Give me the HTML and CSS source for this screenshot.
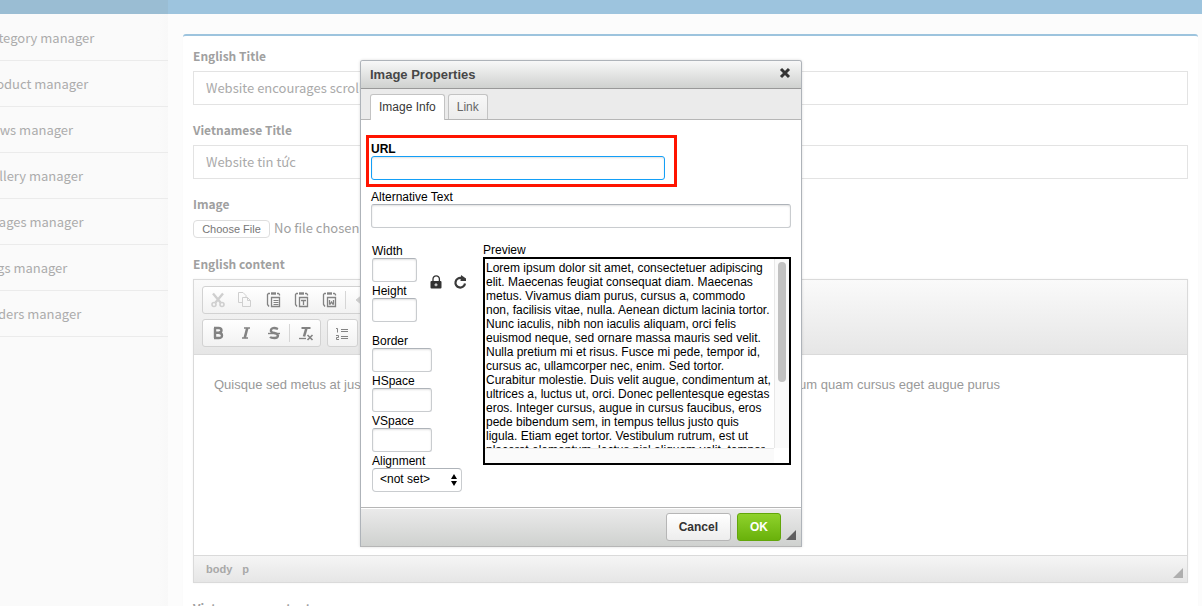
FILE: index.html
```html
<!DOCTYPE html>
<html lang="en">
<head>
<meta charset="utf-8">
<title>Image Properties</title>
<link rel="stylesheet" href="styles.css">
</head>
<body>
<div class="page">
  <header class="topbar"><div class="topbar-brand"></div></header>
  <div class="columns">
    <nav class="sidebar">
      <a href="#">Category manager</a>
      <a href="#">Product manager</a>
      <a href="#">News manager</a>
      <a href="#">Gallery manager</a>
      <a href="#">Images manager</a>
      <a href="#">Tags manager</a>
      <a href="#">Sliders manager</a>
    </nav>
    <main class="main">
      <form class="panel">
        <div class="field">
          <label for="title-en">English Title</label>
          <input class="text-box" id="title-en" type="text" value="Website encourages scrolling">
        </div>
        <div class="field">
          <label for="title-vi">Vietnamese Title</label>
          <input class="text-box" id="title-vi" type="text" value="Website tin tức">
        </div>
        <div class="field">
          <label for="image">Image</label>
          <input class="file-box" id="image" type="file">
        </div>
        <div class="field">
          <span class="label">English content</span>
          <div class="editor">
            <div class="toolbar">
              <div class="toolrow">
                <div class="group">
                  <button type="button" class="tool dim" aria-label="Cut"><svg viewBox="0 0 16 16"><path d="M3 1.500l7.500 9M13 1.500l-7.500 9" stroke-width="2.400"/><circle cx="4" cy="12.500" r="2" stroke-width="1.600"/><circle cx="12" cy="12.500" r="2" stroke-width="1.600"/></svg></button>
                  <button type="button" class="tool dim" aria-label="Copy"><svg viewBox="0 0 16 16"><path d="M4.500 10.500h-4v-10h4.500l3 3v1.500M4.500 5.500h5l3 3v6h-8zM9.500 5.500v3h3"/></svg></button>
                  <button type="button" class="tool" aria-label="Paste"><svg viewBox="0 0 16 16"><path d="M4 1.500h-1.500l-1 1v10l1.500 2M11 1.500h1.500l1 1v1" stroke-width="1.300"/><path d="M5 1.500h5" stroke-width="2.400"/><path d="M5.500 5.500h8v9h-8z" stroke-width="1.300"/><path d="M7.500 8.500h5M7.500 10.500h5M7.500 12.500h5"/></svg></button>
                  <button type="button" class="tool" aria-label="Paste as plain text"><svg viewBox="0 0 16 16"><path d="M4 1.500h-1.500l-1 1v10l1.500 2M11 1.500h1.500l1 1v1" stroke-width="1.300"/><path d="M5 1.500h5" stroke-width="2.400"/><path d="M5.500 5.500h8v9h-8zM7 8.500h5M9.500 8.500v4.500" stroke-width="1.300"/></svg></button>
                  <button type="button" class="tool" aria-label="Paste from Word"><svg viewBox="0 0 16 16"><path d="M4 1.500h-1.500l-1 1v10l1.500 2M11 1.500h1.500l1 1v1" stroke-width="1.300"/><path d="M5 1.500h5" stroke-width="2.400"/><path d="M5.500 5.500h8v9h-8zM7.500 8v4h0.700l1.300-2 1.300 2h0.700V8" stroke-width="1.300"/></svg></button>
                  <span class="sep"></span>
                  <button type="button" class="tool dim" aria-label="Undo"><svg viewBox="0 0 16 16"><path d="M2 8l5-4v8zM7 8h7" fill="currentColor"/></svg></button>
                </div>
              </div>
              <div class="toolrow">
                <div class="group">
                  <button type="button" class="tool" aria-label="Bold"><svg viewBox="0 0 16 16"><path d="M5 3v10M4 3h4.500q3 0 3 2.300T8.500 7.700H5M8.500 7.700q3.500 0 3.500 2.700T8.500 13H4" stroke-width="2.400"/></svg></button>
                  <button type="button" class="tool" aria-label="Italic"><svg viewBox="0 0 16 16"><path d="M6 3h6M4 13h6" stroke-width="1.600"/><path d="M9.300 3l-2.600 10" stroke-width="2.600"/></svg></button>
                  <button type="button" class="tool" aria-label="Strikethrough"><svg viewBox="0 0 16 16"><path d="M12 4Q8.500 2.500 6.500 3.300T5 6.500Q6 7.700 8.500 8T12 10.500Q12 13 8.500 13T4 12" stroke-width="2.300"/><path d="M2 8.500h12" stroke-width="1.400"/></svg></button>
                  <span class="sep"></span>
                  <button type="button" class="tool" aria-label="Remove format"><svg viewBox="0 0 16 16"><path d="M3.500 3h9" stroke-width="2"/><path d="M8.500 3L6 11.500" stroke-width="2.600"/><path d="M1 13.500h7" stroke-width="1.300"/><path d="M9.500 10l5 5M14.500 10l-5 5" stroke-width="1.600"/></svg></button>
                </div>
                <div class="group">
                  <button type="button" class="tool" aria-label="Numbered list"><svg viewBox="0 0 16 16"><path d="M1 3.500h1.500v4M1 10.500h2.500v2h-2v2h2.500M6 4.500h7M6 6.500h7M6 11.500h7M6 13.500h7"/></svg></button>
                </div>
              </div>
            </div>
            <div class="content"><p><span>Quisque sed metus at justo</span><span>vestibulum quam cursus eget augue purus</span></p></div>
            <div class="status"><a href="#">body</a><a href="#">p</a><svg class="grip" viewBox="0 0 10 10"><path d="M10 0v10H0z"/></svg></div>
          </div>
        </div>
        <div class="field"><span class="label">Vietnamese content</span></div>
      </form>
    </main>
  </div>
</div>

<section class="dialog" role="dialog" aria-labelledby="dialog-title">
  <div class="dialog-title">
    <span id="dialog-title">Image Properties</span>
    <button type="button" class="close" aria-label="Close"><svg viewBox="0 0 12 12"><path d="M2 2l8 8M10 2l-8 8"/></svg></button>
  </div>
  <div class="tabs">
    <button type="button" class="tab active">Image Info</button>
    <button type="button" class="tab">Link</button>
  </div>
  <div class="dialog-body">
    <div class="highlight row">
      <label for="url">URL</label>
      <input class="box focused" id="url" type="text">
    </div>
    <div class="row alt">
      <label for="alt">Alternative Text</label>
      <input class="box" id="alt" type="text">
    </div>
    <div class="split">
      <div class="props">
        <div class="size">
          <div class="stack">
            <div class="row small"><label for="w">Width</label><input class="box" id="w" type="text"></div>
            <div class="row small"><label for="h">Height</label><input class="box" id="h" type="text"></div>
          </div>
          <button type="button" class="icon" aria-label="Lock ratio"><svg viewBox="0 0 16 16"><path d="M5 7V4a3.200 3.200 0 0 1 6.400 0V7" fill="none" stroke="#333" stroke-width="1.300"/><rect x="2.500" y="6" width="11" height="7.500" rx="1" fill="#333"/><path d="M8 8.300v3M6.500 9.800h3" stroke="#ddd" stroke-width="1.200"/></svg></button>
          <button type="button" class="icon" aria-label="Reset size"><svg viewBox="0 0 16 16"><path d="M9.500 3.100A4.800 4.800 0 1 0 13 8.500" fill="none" stroke="#3a3a3a" stroke-width="2.200"/><path d="M9 0l5 3.500V6H8.500z" fill="#3a3a3a"/></svg></button>
        </div>
        <div class="stack">
          <div class="row medium"><label for="b">Border</label><input class="box" id="b" type="text"></div>
          <div class="row medium"><label for="hs">HSpace</label><input class="box" id="hs" type="text"></div>
          <div class="row medium"><label for="vs">VSpace</label><input class="box" id="vs" type="text"></div>
          <div class="row align"><label for="al">Alignment</label>
            <div class="select"><select id="al"><option>&lt;not set&gt;</option></select><svg viewBox="0 0 6 12"><path d="M3 0l3 5H0zM3 12L0 7h6z"/></svg></div>
          </div>
        </div>
      </div>
      <div class="preview-col">
        <div>Preview</div>
        <div class="preview">
          <div class="preview-text">Lorem ipsum dolor sit amet, consectetuer adipiscing elit. Maecenas feugiat consequat diam. Maecenas metus. Vivamus diam purus, cursus a, commodo<br>non, facilisis vitae, nulla. Aenean dictum lacinia tortor. Nunc iaculis, nibh non iaculis aliquam, orci felis euismod neque, sed ornare massa mauris sed velit. Nulla pretium mi et risus. Fusce mi pede, tempor id, cursus ac, ullamcorper nec, enim. Sed tortor. Curabitur molestie. Duis velit augue, condimentum at, ultrices a, luctus ut, orci. Donec pellentesque egestas eros. Integer cursus, augue in cursus faucibus, eros pede bibendum sem, in tempus tellus justo quis ligula. Etiam eget tortor. Vestibulum rutrum, est ut placerat elementum, lectus nisl aliquam velit, tempor</div>
          <div class="track-y"><div class="thumb"></div></div>
          <div class="track-x"></div>
        </div>
      </div>
    </div>
  </div>
  <div class="dialog-foot">
    <button type="button" class="btn">Cancel</button>
    <button type="button" class="btn ok">OK</button>
    <svg class="grip" viewBox="0 0 10 10"><path d="M10 0v10H0z"/></svg>
  </div>
</section>
</body>
</html>
```
FILE: styles.css
```css
* { box-sizing: border-box; }
body {
  margin: 0;
  font: 13px/20px "Noto Sans CJK SC", "Noto Sans", sans-serif;
  color: #a3a3a3;
  background: #fcfcfc;
}
button, input, select { font: inherit; color: inherit; margin: 0; }
a { color: inherit; text-decoration: none; }
.page { height: 100vh; overflow: hidden; display: flex; flex-direction: column; }
.topbar { flex: none; height: 14px; background: #9dc4de; }
.topbar-brand { width: 168px; height: 100%; background: #9abdd3; }
.columns { flex: 1; display: flex; align-items: stretch; min-height: 0; }
.sidebar {
  flex: none; width: 168px; padding-top: 1px; overflow: hidden;
  display: flex; flex-direction: column;
  background: linear-gradient(to right, #fafafa 94%, #f8f8f8);
}
.sidebar a {
  height: 46px; line-height: 45px; margin-left: -17px;
  color: #acacac; border-bottom: 1px solid #ebebeb; white-space: nowrap;
}
.main { flex: 1; min-width: 0; padding: 20px 4px 0 15px; }
.panel {
  border-top: 2px solid #9dc4de; border-radius: 3px 3px 0 0;
  background: #fff; padding: 10px; box-shadow: 0 1px 1px rgba(0,0,0,.06);
  display: flex; flex-direction: column; gap: 15px;
}
.field { display: flex; flex-direction: column; gap: 5px; }
.field > label, .label { font-size: 12px; font-weight: 700; line-height: 20px; color: #a0a0a0; }
.text-box {
  width: 100%; height: 34px; padding: 0 12px 2px;
  border: 1px solid #e3e3e3; background: #fff; color: #aaa;
}
.file-box { height: 20px; line-height: 18px; color: #a0a0a0; overflow: visible; }
.file-box::file-selector-button {
  font: 11px/16px "Liberation Sans", Arial, sans-serif; color: #777;
  height: 18px; width: 77px; padding: 0; margin: 0 4px 0 0;
  border: 1px solid #dedede; border-radius: 4px; background: #fff;
}
.editor { border: 1px solid #dadada; box-shadow: 0 0 2px rgba(0,0,0,.06); }
.toolbar {
  padding: 6px 8px 7px; display: flex; flex-direction: column; gap: 5px;
  background: linear-gradient(#fafafa, #e6e6e6); border-bottom: 1px solid #dadada;
}
.toolrow { display: flex; gap: 6px; }
.group {
  display: flex; align-items: center; height: 28px; padding: 0 1px 0 0;
  border: 1px solid #d2d2d2; border-radius: 3px;
  background: linear-gradient(#fff, #f2f2f2);
}
.tool { width: 28px; height: 26px; padding: 0 5px 0 7px; border: 0; background: none; color: #838383; display: flex; align-items: center; }
.tool svg { width: 16px; height: 16px; fill: none; stroke: currentColor; }
.dim { color: #cfcfcf; }
.sep { width: 1px; height: 18px; margin: 0 1px 0 2px; background: #d6d6d6; }
.content { height: 200px; padding: 20px; font: 13px/20px "Liberation Sans", Arial, sans-serif; color: #999; }
.content p { margin: 0; max-width: 786px; display: flex; justify-content: space-between; white-space: nowrap; }
.status {
  display: flex; align-items: center; gap: 10px; height: 27px; padding: 0 4px 0 12px;
  border-top: 1px solid #dadada; background: linear-gradient(#f5f5f5, #e6e6e6);
  font: bold 11px/16px "Liberation Sans", Arial, sans-serif; color: #a8a8a8;
}
.grip { width: 10px; height: 10px; margin-left: auto; fill: #aeaeae; align-self: flex-end; margin-bottom: 4px; }

.dialog {
  position: absolute; left: 360px; top: 60px; width: 442px;
  border: 1px solid #aeb3b9; border-bottom-color: #b6b6b6; border-radius: 3px 3px 0 0;
  box-shadow: 0 0 3px rgba(0,0,0,.15); background: #fff;
  font: 12px/14px "Liberation Sans", Arial, sans-serif; color: #000;
}
.dialog-title {
  display: flex; align-items: center; justify-content: space-between;
  height: 28px; padding: 0 10px 0 9px; border-bottom: 1px solid #999;
  border-radius: 2px 2px 0 0; background: linear-gradient(#f8f8f8, #cfd1cf);
  font-size: 13px; font-weight: bold; color: #474747;
}
.close { display: flex; padding: 0; border: 0; background: none; margin-bottom: 3px; }
.close svg { width: 12px; height: 12px; stroke: #333; stroke-width: 3; }
.tabs {
  display: flex; align-items: flex-end; gap: 3px; height: 31px; padding: 0 9px;
  background: #ebebeb; border-bottom: 1px solid #b6b6b6;
}
.tab {
  height: 25px; padding: 0 8px; border: 1px solid #c3c3c3; border-bottom: 0;
  border-radius: 3px 3px 0 0; background: linear-gradient(#f8f8f8, #ececec); color: #676767;
}
.tab.active { height: 26px; margin-bottom: -1px; padding-bottom: 1px; background: #fff; color: #383838; }
.dialog-body { padding: 15px 10px; }
.row { display: flex; flex-direction: column; }
.highlight { width: 311px; margin-left: -5px; padding: 4px 9px 4px 2px; border: 3px solid #ff1400; font-weight: bold; }
.alt { margin-top: 3px; }
.box {
  width: 100%; height: 24px; padding: 0 4px; background: #fff;
  border: 1px solid #c9cccf; border-top-color: #aeb3b9; border-radius: 3px;
  box-shadow: inset 0 1px 2px rgba(0,0,0,.12);
}
.focused { border-color: #139ff7; }
.split { display: flex; margin-top: 15px; }
.props { width: 112px; padding: 1px 0 0 1px; display: flex; flex-direction: column; gap: 12px; }
.stack { display: flex; flex-direction: column; gap: 2px; }
.size { display: flex; align-items: center; gap: 8px; }
.size .stack { margin-right: 3px; }
.small { width: 45px; }
.medium { width: 60px; }
.align { width: 90px; }
.icon { width: 16px; padding: 0; border: 0; background: none; display: flex; }
.icon svg { width: 16px; height: 16px; }
.select { display: grid; align-items: center; }
.select select, .select svg { grid-area: 1 / 1; }
.select select {
  appearance: none; height: 24px; padding: 0 8px 2px 7px; background: #fff;
  border: 1px solid #c9cccf; border-top-color: #aeb3b9; border-radius: 4px;
}
.select svg { width: 6px; height: 12px; justify-self: end; margin-right: 5px; pointer-events: none; }
.preview-col { flex: 1; min-width: 0; }
.preview {
  height: 208px; border: 2px solid #000; display: grid;
  grid-template: minmax(0, 1fr) 15px / minmax(0, 1fr) 15px;
}
.preview-text { padding: 2px 2px 0 1px; overflow: hidden; }
.track-y { background: #fafafa; border-left: 1px solid #e8e8e8; padding: 3px 3px 0; }
.thumb { height: 120px; border-radius: 4px; background: #c1c1c1; }
.track-x { background: #fafafa; border-top: 1px solid #e8e8e8; }
.dialog-foot {
  display: flex; align-items: center; justify-content: flex-end; gap: 6px;
  height: 39px; padding-right: 5px; border-top: 1px solid #b6b6b6;
  background: linear-gradient(#ebebeb, #cfd1cf); box-shadow: inset 0 1px 0 #fff;
}
.btn {
  height: 28px; padding: 0 12px; border: 1px solid #b6b6b6; border-radius: 3px;
  background: linear-gradient(#fff, #ededed); font-weight: bold; color: #333;
}
.ok { border-color: #62a60a; background: linear-gradient(#8fd22c, #69b10b); color: #fff; }
.dialog-foot .grip { margin: 0 0 6px -1px; fill: #5f5f5f; }
```
